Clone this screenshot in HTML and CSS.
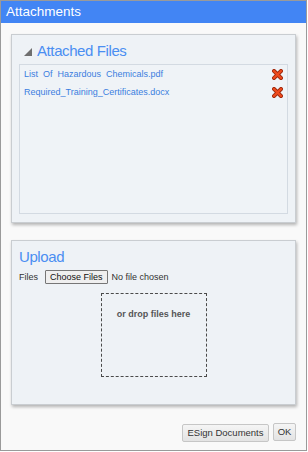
FILE: index.html
```html
<!DOCTYPE html>
<html>
<head>
<meta charset="utf-8">
<link rel="stylesheet" href="styles.css">
</head>
<body>
<div class="dialog">
  <div class="titlebar">Attachments</div>
  <div class="content">
    <section class="panel">
      <h2 class="heading heading-toggle"><span class="tri"></span>Attached Files</h2>
      <div class="filelist">
        <div class="filerow">
          <a class="filelink">List  Of  Hazardous  Chemicals.pdf</a>
          <svg class="del" width="11" height="11" viewBox="0 0 11 11"><path d="M2 2L9 9M9 2L2 9" stroke="#9c2a10" stroke-width="4" stroke-linecap="square"/><path d="M2 2L9 9M9 2L2 9" stroke="#ef4a1c" stroke-width="2.2" stroke-linecap="square"/></svg>
        </div>
        <div class="filerow">
          <a class="filelink">Required_Training_Certificates.docx</a>
          <svg class="del" width="11" height="11" viewBox="0 0 11 11"><path d="M2 2L9 9M9 2L2 9" stroke="#9c2a10" stroke-width="4" stroke-linecap="square"/><path d="M2 2L9 9M9 2L2 9" stroke="#ef4a1c" stroke-width="2.2" stroke-linecap="square"/></svg>
        </div>
      </div>
    </section>
    <section class="panel panel-upload">
      <h2 class="heading">Upload</h2>
      <div class="filesrow">
        <span class="label">Files</span>
        <span class="choose">Choose Files</span>
        <span class="nofile">No file chosen</span>
      </div>
      <div class="dropzone">or drop files here</div>
    </section>
    <div class="actions">
      <button class="btn btn-esign">ESign Documents</button>
      <button class="btn btn-ok">OK</button>
    </div>
  </div>
</div>
</body>
</html>
```
FILE: styles.css
```css
* { box-sizing: border-box; }
html, body { margin: 0; padding: 0; background: #ffffff; }
body { font-family: "Liberation Sans", Arial, sans-serif; }

.dialog {
  width: 307px;
  height: 451px;
  border: 1px solid #9a9a9a;
  background: #f9f9f9;
  display: flex;
  flex-direction: column;
}

.titlebar {
  height: 22px;
  line-height: 22px;
  background: #4285f4;
  color: #ffffff;
  font-size: 13.5px;
  padding-left: 5px;
}

.content {
  padding: 11px 10px 0 10px;
  display: flex;
  flex-direction: column;
}

.panel {
  background: #eef2f6;
  border: 1px solid #c9cdd1;
  box-shadow: 1px 2px 3px rgba(0,0,0,0.28);
  padding: 7px 7px 8px 7px;
}

.heading {
  margin: 0;
  font-weight: normal;
  font-size: 15px;
  line-height: 18px;
  letter-spacing: -0.4px;
  color: #4a8ef2;
  display: flex;
  align-items: center;
}

.heading-toggle { padding-left: 5px; }

.tri {
  width: 0;
  height: 0;
  border-style: solid;
  border-width: 0 0 8px 8px;
  border-color: transparent transparent #6f6f6f transparent;
  margin-right: 5px;
  margin-top: 2px;
}

.filelist {
  margin-top: 4px;
  height: 150px;
  border: 1px solid #d3dae2;
  background: #eff3f7;
  padding: 0 4px;
}

.filerow {
  height: 18px;
  display: flex;
  align-items: center;
  justify-content: space-between;
}

.filelink {
  font-size: 9px;
  line-height: 18px;
  color: #3b7ee0;
  white-space: pre;
}

.del { display: block; margin-top: 1px; }

.panel-upload {
  margin-top: 17px;
  padding-bottom: 27px;
}

.filesrow {
  margin-top: 4px;
  height: 14px;
  display: flex;
  align-items: center;
  font-size: 9px;
  color: #333333;
}

.label { margin-right: 7px; }

.choose {
  height: 14px;
  line-height: 12px;
  padding: 0 4px;
  border: 1px solid #767676;
  background: #efefef;
  color: #111111;
  border-radius: 1px;
}

.nofile { margin-left: 4px; color: #333333; }

.dropzone {
  margin: 9px auto 0 auto;
  width: 106px;
  height: 84px;
  border: 1px dashed #4a4a4a;
  text-align: center;
  font-size: 9px;
  font-weight: bold;
  line-height: 11px;
  color: #555555;
  padding-top: 15px;
}

.actions {
  margin-top: 18px;
  display: flex;
  justify-content: flex-end;
  align-items: flex-start;
  gap: 4px;
}

.btn {
  font-family: "Liberation Sans", Arial, sans-serif;
  font-size: 9.5px;
  color: #333333;
  height: 18px;
  border: 1px solid #c6c6c6;
  border-radius: 2px;
  background: linear-gradient(#f5f5f5, #e3e3e3);
  padding: 0;
  line-height: 16px;
  margin: 0;
  white-space: nowrap;
  text-align: center;
}

.btn-esign { width: 87px; margin-top: 1px; }
.btn-ok { width: 23px; }
```
